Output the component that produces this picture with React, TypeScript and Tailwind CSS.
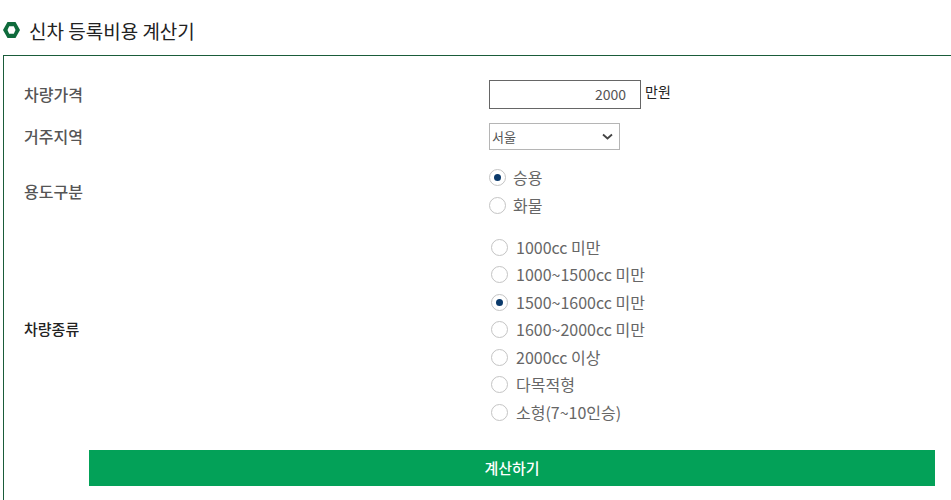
import React from "react"

const font = { fontFamily: '"Noto Sans CJK KR", "Noto Sans", sans-serif' }

const carTypes = [
  { label: "1000cc 미만" },
  { label: "1000~1500cc 미만" },
  { label: "1500~1600cc 미만", checked: true },
  { label: "1600~2000cc 미만" },
  { label: "2000cc 이상" },
  { label: "다목적형" },
  { label: "소형(7~10인승)" },
]

function Radio({ label, checked, className }: { label: string; checked?: boolean; className: string }) {
  return (
    <div className={`flex items-center ${className}`}>
      <span className="flex h-[17px] w-[17px] shrink-0 items-center justify-center rounded-full border border-[#c4c4c4] bg-white">
        {checked && <span className="h-[7px] w-[7px] rounded-full bg-[#0b3a6b]" />}
      </span>
      <span className="pb-[0.5px] text-[16px] leading-[20px] text-[#666666]">{label}</span>
    </div>
  )
}

export default function App() {
  return (
    <div className="h-[500px] w-[951px] overflow-hidden bg-white" style={font}>
      <div className="flex h-[55px] items-center pt-[7px] pl-[3px]">
        <svg width="17" height="16" viewBox="0 0 17 16" className="mb-[2px] shrink-0">
          <path
            fillRule="evenodd"
            d="M4.500 0h8L17 8l-4.500 8h-8L0 8zM6.200 4.200h4.600L12.500 8l-1.700 3.800H6.200L4.500 8z"
            fill="#0f6b3c"
          />
        </svg>
        <h1 className="ml-[9px] text-[19px] font-normal leading-[24px] text-[#222222]">신차 등록비용 계산기</h1>
      </div>

      <div className="ml-[3px] h-[460px] w-[960px] border-l border-t border-[#1a5c3a] pl-[20px] pt-[24px]">
        <div className="flex h-[29px] items-center">
          <div className="w-[465px] pb-[2px] text-[16px] font-medium text-[#555555]">차량가격</div>
          <div className="flex items-start">
            <div className="h-[29px] w-[152px] border border-[#666666] pr-[14px] pt-[3px] text-right text-[14px] leading-[21px] text-[#555555]">2000</div>
            <span className="ml-[4px] text-[14px] leading-[22px] text-[#222222]">만원</span>
          </div>
        </div>

        <div className="mt-[14px] flex h-[27px] items-center">
          <div className="w-[465px] pb-[2px] text-[16px] font-medium text-[#555555]">거주지역</div>
          <div className="flex h-[27px] w-[131px] items-center justify-between border border-[#b5b5b5] pl-[2px] pr-[6px] text-[13px] text-[#555555]">
            <span>서울</span>
            <svg width="11" height="7" viewBox="0 0 11 7">
              <path d="M1 1.500 5.500 5.500 10 1.500" fill="none" stroke="#444444" strokeWidth="1.800" />
            </svg>
          </div>
        </div>

        <div className="mt-[13px] flex h-[56px] items-center">
          <div className="w-[465px] text-[16px] font-medium text-[#555555]">용도구분</div>
          <div className="flex flex-col">
            <Radio label="승용" checked className="h-[28px] gap-[7px]" />
            <Radio label="화물" className="h-[28px] gap-[7px]" />
          </div>
        </div>

        <div className="mt-[14px] flex h-[193px] items-center">
          <div className="w-[465px] text-[15px] font-medium text-[#222222]">차량종류</div>
          <div className="pl-[2px]">
            {carTypes.map((item) => (
              <Radio key={item.label} label={item.label} checked={item.checked} className="h-[27.500px] gap-2" />
            ))}
          </div>
        </div>

        <div className="ml-[65px] mt-[24px] flex h-[36px] w-[846px] items-center justify-center bg-[#03a158] text-[15px] font-medium text-white">
          계산하기
        </div>
      </div>
    </div>
  )
}
